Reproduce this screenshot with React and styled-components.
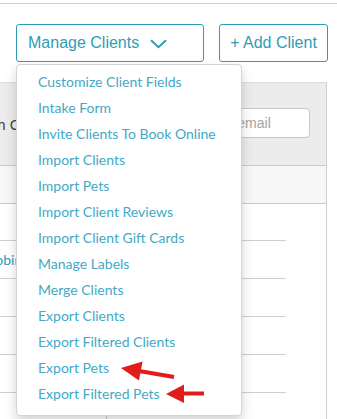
import React from "react";
import styled, { createGlobalStyle } from "styled-components";

const GlobalStyle = createGlobalStyle`
    html, body {
        margin: 0;
        padding: 0;
        background: #fff;
        overflow: hidden;
    }
    body {
        width: 337px;
        height: 419px;
        font-family: "Liberation Sans", Arial, sans-serif;
    }
`;

const menuItems = [
    "Customize Client Fields",
    "Intake Form",
    "Invite Clients To Book Online",
    "Import Clients",
    "Import Pets",
    "Import Client Reviews",
    "Import Client Gift Cards",
    "Manage Labels",
    "Merge Clients",
    "Export Clients",
    "Export Filtered Clients",
    "Export Pets",
    "Export Filtered Pets",
];

const rows = ["", "Robinson, Kate", "", "", "", ""];

function App() {
    return (
        <>
            <GlobalStyle />
            <Page>
                <TopNav />
                <Toolbar>
                    <MenuWrap>
                        <ToolButton wide>
                            <span>Manage Clients</span>
                            <Chevron width="17" height="10" viewBox="0 0 17 10">
                                <path d="M1 1.2 L8.5 8.2 L16 1.2" fill="none" stroke="#2e9db6" strokeWidth="2" />
                            </Chevron>
                        </ToolButton>
                        <Dropdown>
                            {menuItems.map((item) => (
                                <MenuItem key={item}>{item}</MenuItem>
                            ))}
                        </Dropdown>
                    </MenuWrap>
                    <ToolButton>+ Add Client</ToolButton>
                </Toolbar>

                <Panel>
                    <PanelHead>
                        <SearchLabel>Search Clients</SearchLabel>
                        <SearchInput placeholder="Name, phone or email" />
                    </PanelHead>
                    <SubHead />
                    <Table>
                        {rows.map((name, i) => (
                            <Row key={i}>
                                <NameCell>{name}</NameCell>
                                <Cell />
                            </Row>
                        ))}
                    </Table>
                </Panel>

                <Arrows width="337" height="419" viewBox="0 0 337 419">
                    <line x1="139" y1="371" x2="174" y2="377" stroke="#e21b1b" strokeWidth="4" />
                    <polygon points="121,368 142.5,361.5 139,380.5" fill="#e21b1b" />
                    <line x1="182" y1="393.5" x2="204" y2="393.5" stroke="#e21b1b" strokeWidth="4" />
                    <polygon points="166,394 184,384.5 184,403" fill="#e21b1b" />
                </Arrows>
            </Page>
        </>
    );
}

export default App;

const Page = styled.div`
    position: relative;
    width: 337px;
    height: 419px;
    overflow: hidden;
`;
const TopNav = styled.div`
    height: 3px;
    border-bottom: 1px solid #cfcfcf;
`;
const Toolbar = styled.div`
    display: flex;
    gap: 15px;
    padding: 20px 0 0 16px;
`;
const MenuWrap = styled.div`
    position: relative;
`;
const ToolButton = styled.button`
    display: flex;
    align-items: center;
    justify-content: ${(p) => (p.wide ? "flex-start" : "center")};
    gap: 11px;
    box-sizing: border-box;
    height: 38px;
    width: ${(p) => (p.wide ? "188px" : "109px")};
    padding: ${(p) => (p.wide ? "0 0 0 11px" : "0")};
    background: #fff;
    border: 1px solid #2e9db6;
    border-radius: 3px;
    color: #2e9db6;
    font-family: "Liberation Sans", Arial, sans-serif;
    font-size: 16px;
`;
const Chevron = styled.svg`
    display: block;
    margin-top: 1px;
`;
const Dropdown = styled.ul`
    position: absolute;
    top: 40px;
    left: 0;
    z-index: 5;
    box-sizing: border-box;
    width: 226px;
    margin: 0;
    padding: 4px 0 8px;
    list-style: none;
    background: #fff;
    border: 1px solid #d4d4d4;
    border-radius: 4px;
    box-shadow: 0 6px 12px rgba(0, 0, 0, 0.17);
`;
const MenuItem = styled.li`
    padding: 0 21px;
    line-height: 26px;
    font-family: Lato, "Open Sans", sans-serif;
    font-size: 14px;
    color: #42a9c6;
    white-space: nowrap;
`;
const Panel = styled.section`
    box-sizing: border-box;
    width: 527px;
    margin: 20px 0 0 -200px;
    border-right: 1px solid #cfcfcf;
    border-top: 1px solid #dedede;
`;
const PanelHead = styled.div`
    display: flex;
    align-items: center;
    justify-content: space-between;
    height: 83px;
    padding: 0 16px 12px 158px;
    box-sizing: border-box;
    background: #ececec;
    border-bottom: 1px solid #cbcbcb;
`;
const SearchLabel = styled.label`
    font-size: 15px;
    color: #444;
    margin-top: 12px;
`;
const SearchInput = styled.input`
    box-sizing: border-box;
    width: 188px;
    height: 30px;
    margin-top: 9px;
    padding: 0 10px;
    border: 1px solid #c8c8c8;
    border-radius: 4px;
    background: #fff;
    font-family: "Liberation Sans", Arial, sans-serif;
    font-size: 14px;
    &::placeholder {
        color: #a3a3a3;
    }
`;
const SubHead = styled.div`
    height: 37px;
    background: #f7f7f7;
    border-bottom: 1px solid #cbcbcb;
`;
const Table = styled.div`
    width: 346px;
    margin-left: 140px;
`;
const Row = styled.div`
    display: flex;
    height: 37px;
    border-bottom: 1px solid #cfcfcf;
    &:first-child {
        height: 36px;
    }
`;
const NameCell = styled.div`
    width: 167px;
    box-sizing: border-box;
    padding-left: 47px;
    border-right: 1px solid #cfcfcf;
    line-height: 37px;
    font-family: Lato, "Open Sans", sans-serif;
    font-size: 14px;
    color: #2e9db6;
    white-space: nowrap;
`;
const Cell = styled.div`
    flex: 1;
`;
const Arrows = styled.svg`
    position: absolute;
    top: 0;
    left: 0;
    z-index: 10;
    pointer-events: none;
`;
